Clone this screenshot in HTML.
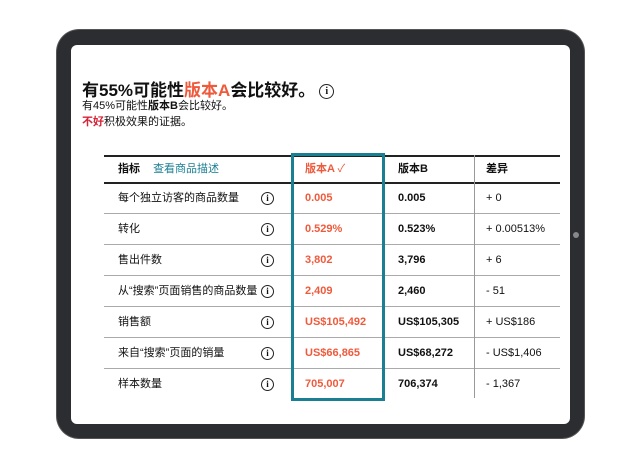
<!DOCTYPE html>
<html><head><meta charset="utf-8"><style>
body{margin:0;width:640px;height:466px;background:#fff;position:relative;overflow:hidden;font-family:"Liberation Sans","Noto Sans CJK SC",sans-serif;color:#111}
.frame{position:absolute;left:57px;top:30px;width:527px;height:408px;background:#2b2d30;border-radius:22px;box-shadow:0 0 0 1px #555}
.screen{position:absolute;left:71px;top:45px;width:499px;height:379px;background:#fff;border-radius:6px}
.dot{position:absolute;left:573px;top:232px;width:6px;height:6px;border-radius:3px;background:#888}
.t1{position:absolute;left:82px;top:76px;font-size:17px;font-weight:bold;white-space:nowrap}
.t2{position:absolute;left:82px;top:97px;font-size:11px;white-space:nowrap}
.t3{position:absolute;left:82px;top:113px;font-size:11px;white-space:nowrap}
.r{color:#f05a3c}.rd{color:#d6243a;font-weight:bold}
.info{display:inline-block;width:11px;height:11px;border:1.5px solid #222;border-radius:50%;font-size:9px;line-height:11px;text-align:center;font-weight:bold;vertical-align:middle;font-family:"Liberation Serif",serif}
.big{width:13px;height:13px;line-height:13px;font-size:10px;margin-left:4px}
.row{position:absolute;left:104px;width:456px;height:31px;border-top:1px solid #aaa;font-size:11px}
.row div{position:absolute;top:0;line-height:31px;white-space:nowrap}
.c1{left:14px}.ci{left:157px}.c2{left:201px;color:#f05a3c;font-weight:bold}.c3{left:294px;font-weight:bold}.c4{left:382px}
.vl{position:absolute;left:474px;top:155px;width:1px;height:243px;background:#999}
.box{position:absolute;left:291px;top:153px;width:88px;height:242px;border:3px solid #1a7f92}
</style></head><body>
<div class="frame"></div><div class="screen"></div><div class="dot"></div>
<div class="t1">有55%可能性<span class="r">版本A</span>会比较好。<span class="info big">i</span></div>
<div class="t2">有45%可能性<b>版本B</b>会比较好。</div>
<div class="t3"><span class="rd">不好</span>积极效果的证据。</div>
<div class="row" style="top:155px;height:25px;border-top:2px solid #222;border-bottom:2px solid #222"><div class="c1" style="line-height:25px;font-weight:bold">指标 <span style="font-weight:normal;color:#1a7f92;margin-left:10px">查看商品描述</span></div><div class="c2" style="line-height:25px">版本A <span style="font-weight:normal">✓</span></div><div class="c3" style="line-height:25px">版本B</div><div class="c4" style="line-height:25px;font-weight:bold">差异</div></div>
<div class="row" style="top:183px;border-top:none"><div class="c1">每个独立访客的商品数量</div><div class="ci"><span class="info">i</span></div><div class="c2">0.005</div><div class="c3">0.005</div><div class="c4">+ 0</div></div>
<div class="row" style="top:213px"><div class="c1">转化</div><div class="ci"><span class="info">i</span></div><div class="c2">0.529%</div><div class="c3">0.523%</div><div class="c4">+ 0.00513%</div></div>
<div class="row" style="top:244px"><div class="c1">售出件数</div><div class="ci"><span class="info">i</span></div><div class="c2">3,802</div><div class="c3">3,796</div><div class="c4">+ 6</div></div>
<div class="row" style="top:275px"><div class="c1">从“搜索”页面销售的商品数量</div><div class="ci"><span class="info">i</span></div><div class="c2">2,409</div><div class="c3">2,460</div><div class="c4">- 51</div></div>
<div class="row" style="top:306px"><div class="c1">销售额</div><div class="ci"><span class="info">i</span></div><div class="c2">US$105,492</div><div class="c3">US$105,305</div><div class="c4">+ US$186</div></div>
<div class="row" style="top:337px"><div class="c1">来自“搜索”页面的销量</div><div class="ci"><span class="info">i</span></div><div class="c2">US$66,865</div><div class="c3">US$68,272</div><div class="c4">- US$1,406</div></div>
<div class="row" style="top:368px"><div class="c1">样本数量</div><div class="ci"><span class="info">i</span></div><div class="c2">705,007</div><div class="c3">706,374</div><div class="c4">- 1,367</div></div>
<div class="vl"></div><div class="box"></div>
</body></html>
